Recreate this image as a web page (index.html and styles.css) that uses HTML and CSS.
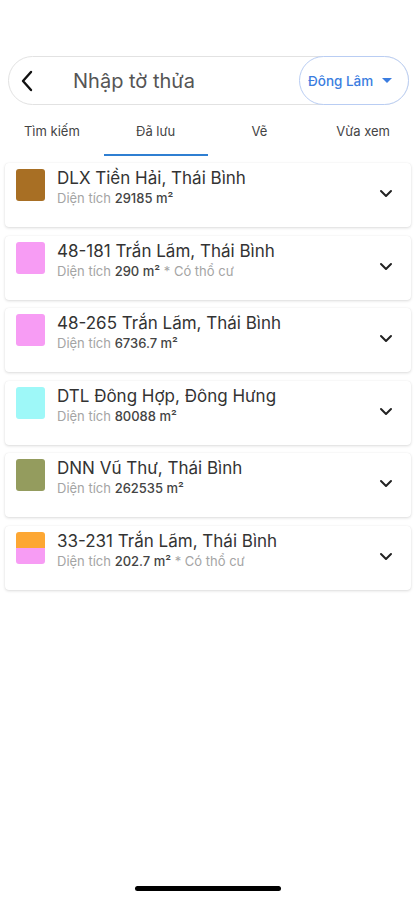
FILE: index.html
```html
<!DOCTYPE html>
<html lang="vi">
<head>
    <meta charset="UTF-8">
    <meta name="viewport" content="width=device-width, initial-scale=1.0">
    <title>Đã lưu</title>
    <link rel="stylesheet" href="styles.css">
</head>
<body>
    <div class="app">
        <div class="search">
            <button class="back" type="button">
                <svg width="14" height="22" viewBox="0 0 14 22"><path d="M11 2 L3 11 L11 20" fill="none" stroke="#111" stroke-width="2.4" stroke-linecap="round" stroke-linejoin="round"/></svg>
            </button>
            <input class="search-input" type="text" placeholder="Nhập tờ thửa">
            <button class="area" type="button">
                Đông Lâm
                <svg width="10" height="6" viewBox="0 0 10 6"><path d="M0 0 L10 0 L5 5 Z" fill="#3b7de0"/></svg>
            </button>
        </div>

        <div class="tabs">
            <div class="tab">Tìm kiếm</div>
            <div class="tab active">Đã lưu</div>
            <div class="tab">Vẽ</div>
            <div class="tab">Vừa xem</div>
        </div>

        <div class="list">
            <div class="card">
                <div class="swatch" style="background:#a86f24"></div>
                <div class="info">
                    <div class="title">DLX Tiền Hải, Thái Bình</div>
                    <div class="sub">Diện tích <b>29185 m²</b></div>
                </div>
                <svg class="chev" width="14" height="9" viewBox="0 0 14 9"><path d="M2 2 L7 7 L12 2" fill="none" stroke="#222" stroke-width="2" stroke-linecap="round" stroke-linejoin="round"/></svg>
            </div>
            <div class="card">
                <div class="swatch" style="background:#f79cf4"></div>
                <div class="info">
                    <div class="title">48-181 Trắn Lãm, Thái Bình</div>
                    <div class="sub">Diện tích <b>290 m²</b> * Có thổ cư</div>
                </div>
                <svg class="chev" width="14" height="9" viewBox="0 0 14 9"><path d="M2 2 L7 7 L12 2" fill="none" stroke="#222" stroke-width="2" stroke-linecap="round" stroke-linejoin="round"/></svg>
            </div>
            <div class="card">
                <div class="swatch" style="background:#f79cf4"></div>
                <div class="info">
                    <div class="title">48-265 Trắn Lãm, Thái Bình</div>
                    <div class="sub">Diện tích <b>6736.7 m²</b></div>
                </div>
                <svg class="chev" width="14" height="9" viewBox="0 0 14 9"><path d="M2 2 L7 7 L12 2" fill="none" stroke="#222" stroke-width="2" stroke-linecap="round" stroke-linejoin="round"/></svg>
            </div>
            <div class="card">
                <div class="swatch" style="background:#9ef8f8"></div>
                <div class="info">
                    <div class="title">DTL Đông Hợp, Đông Hưng</div>
                    <div class="sub">Diện tích <b>80088 m²</b></div>
                </div>
                <svg class="chev" width="14" height="9" viewBox="0 0 14 9"><path d="M2 2 L7 7 L12 2" fill="none" stroke="#222" stroke-width="2" stroke-linecap="round" stroke-linejoin="round"/></svg>
            </div>
            <div class="card">
                <div class="swatch" style="background:#949c5e"></div>
                <div class="info">
                    <div class="title">DNN Vũ Thư, Thái Bình</div>
                    <div class="sub">Diện tích <b>262535 m²</b></div>
                </div>
                <svg class="chev" width="14" height="9" viewBox="0 0 14 9"><path d="M2 2 L7 7 L12 2" fill="none" stroke="#222" stroke-width="2" stroke-linecap="round" stroke-linejoin="round"/></svg>
            </div>
            <div class="card">
                <div class="swatch split"></div>
                <div class="info">
                    <div class="title">33-231 Trắn Lãm, Thái Bình</div>
                    <div class="sub">Diện tích <b>202.7 m²</b> * Có thổ cư</div>
                </div>
                <svg class="chev" width="14" height="9" viewBox="0 0 14 9"><path d="M2 2 L7 7 L12 2" fill="none" stroke="#222" stroke-width="2" stroke-linecap="round" stroke-linejoin="round"/></svg>
            </div>
        </div>

        <div class="home-bar"></div>
    </div>
</body>
</html>
```

FILE: styles.css
```css
body {
    margin: 0;
    font-family: Inter, "Noto Sans", sans-serif;
    background: #fff;
    color: #333;
}
.app {
    width: 415px;
    height: 900px;
    display: flex;
    flex-direction: column;
}
.search {
    margin: 56px 6px 0 8px;
    height: 49px;
    border: 1px solid #e2e2e2;
    border-radius: 25px;
    display: flex;
    align-items: center;
    box-sizing: border-box;
}
.back {
    border: none;
    background: none;
    padding: 0 0 0 11px;
    width: 44px;
    height: 100%;
    display: flex;
    align-items: center;
    cursor: pointer;
}
.search-input {
    flex: 1;
    border: none;
    outline: none;
    font-family: inherit;
    font-size: 20px;
    padding: 0 0 0 20px;
    min-width: 0;
    background: transparent;
}
.search-input::placeholder {
    color: #555;
}
.area {
    height: 49px;
    width: 110px;
    margin-right: -1px;
    box-sizing: border-box;
    border: 1px solid #b9cdf3;
    border-radius: 25px;
    background: #fff;
    color: #3b7de0;
    font-family: inherit;
    font-size: 13.5px;
    font-weight: 500;
    display: flex;
    align-items: center;
    gap: 9px;
    padding: 0 0 0 8px;
}
.tabs {
    display: grid;
    grid-template-columns: repeat(4, 1fr);
    margin-top: 6px;
}
.tab {
    text-align: center;
    font-size: 13px;
    color: #444;
    height: 45px;
    line-height: 40px;
    box-sizing: border-box;
}
.tab.active {
    border-bottom: 2px solid #2f7fd2;
}
.list {
    display: flex;
    flex-direction: column;
    gap: 8.5px;
    padding: 7px 4px 0 5px;
}
.card {
    height: 64px;
    border-radius: 4px;
    background: #fff;
    box-shadow: 0 1px 3px rgba(0, 0, 0, 0.14), 0 0 1px rgba(0, 0, 0, 0.08);
    display: flex;
    align-items: flex-start;
    padding: 0 18px 0 11px;
}
.swatch {
    width: 29px;
    height: 32px;
    margin-top: 6px;
    border-radius: 3px;
    flex-shrink: 0;
}
.swatch.split {
    background: linear-gradient(#fda733 50%, #f79cf4 50%);
}
.info {
    flex: 1;
    margin-left: 12px;
    margin-top: 4px;
}
.title {
    font-size: 17px;
    color: #333;
    line-height: 23px;
}
.sub {
    font-size: 13px;
    color: #a4a4a4;
    line-height: 16px;
}
.sub b {
    color: #444;
    font-weight: 500;
}
.chev {
    margin-top: 26px;
}
.home-bar {
    margin: auto auto 9px;
    width: 146px;
    height: 5px;
    border-radius: 3px;
    background: #000;
}
```
